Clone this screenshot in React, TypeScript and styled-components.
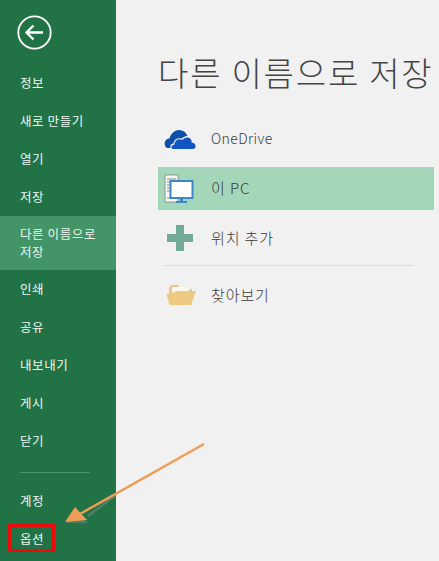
import React, { FunctionComponent } from "react";
import styled, { createGlobalStyle } from "styled-components";

const GlobalStyle = createGlobalStyle`
  html, body {
    margin: 0;
    padding: 0;
    background: #f1f1f1;
  }
  * {
    box-sizing: border-box;
  }
`;

const Page = styled.div`
  position: relative;
  width: 439px;
  height: 561px;
  display: flex;
  overflow: hidden;
  font-family: "Noto Sans CJK KR", "Noto Sans", sans-serif;
`;

const Sidebar = styled.nav`
  width: 116px;
  height: 100%;
  flex-shrink: 0;
  background-color: #217346;
  display: flex;
  flex-direction: column;
  padding-top: 15px;
`;

const BackButton = styled.div`
  width: 35px;
  height: 35px;
  margin: 0 0 14px 17px;
  display: flex;
`;

const NavItem = styled.div<{ $active?: boolean }>`
  display: flex;
  align-items: center;
  padding: ${(p) => (p.$active ? "9px 20px" : "0 20px 1px")};
  min-height: ${(p) => (p.$active ? "54px" : "38px")};
  background-color: ${(p) => (p.$active ? "#439467" : "transparent")};
  color: #f0f6f2;
  font-size: 12.5px;
  line-height: 18px;
  letter-spacing: 0.6px;
`;

const NavDivider = styled.div`
  height: 1px;
  margin: 12px 26px 9px 20px;
  background-color: #4f9270;
`;

const Main = styled.main`
  flex: 1;
  padding: 49px 5px 0 42px;
  display: flex;
  flex-direction: column;
  background-color: #f1f1f1;
`;

const Title = styled.h1`
  margin: 0 0 21px;
  height: 47px;
  line-height: 47px;
  font-size: 33px;
  font-weight: 300;
  color: #444444;
  letter-spacing: 1.8px;
  white-space: nowrap;
`;

const PlaceRow = styled.div<{ $active?: boolean; $latin?: boolean }>`
  display: flex;
  align-items: center;
  height: ${(p) => (p.$active ? "43px" : "44px")};
  background-color: ${(p) => (p.$active ? "#a4d7b9" : "transparent")};
  color: #3a3a3a;
  font-size: ${(p) => (p.$latin ? "14px" : "15px")};
  font-weight: 300;
  letter-spacing: ${(p) => (p.$latin ? "0.4px" : "0.9px")};

  & + & {
    margin-top: 6px;
  }
`;

const PlaceLabel = styled.span`
  padding-bottom: 2px;
`;

const IconSlot = styled.div<{ $inset?: number }>`
  width: 53px;
  padding-left: ${(p) => p.$inset ?? 6}px;
  display: flex;
  align-items: center;
`;

const PlaceDivider = styled.div`
  height: 1px;
  margin: 5px 20px 7px 5px;
  background-color: #dcdcdc;
`;

const RedBox = styled.div`
  position: absolute;
  left: 8px;
  top: 524px;
  width: 47px;
  height: 28px;
  border: 3px solid #ee0a0a;
`;

const ArrowLayer = styled.svg`
  position: absolute;
  left: 0;
  top: 0;
  pointer-events: none;
`;

const BackIcon = () => (
  <svg width="35" height="35" viewBox="0 0 35 35" fill="none" stroke="#ffffff">
    <circle cx="17.5" cy="17.5" r="16.2" strokeWidth="1.8" />
    <path d="M9.5 17.5 H26 M16.5 10.5 L9.5 17.5 L16.5 24.5" strokeWidth="2.4" />
  </svg>
);

const CloudIcon = () => (
  <svg width="32" height="22" viewBox="0 0 32 22">
    <path
      d="M2 19.5 C-1 15 1.5 10.500 5.500 10.500 C7 5 11 2 15 2 C19 2 22 4 23.500 8 C21 8 19 9 18 10.500 C14 9.500 10 11 9.500 15.500 C7 15.500 6 17.500 6.500 20 C4.500 20 3 20 2 19.500 Z"
      fill="#0f4fa8"
    />
    <path
      d="M9 21 C7 21 6.500 17 10.500 16.500 C10.500 12 15 10 18.500 12 C20 9.500 24.500 8 27 11.500 C28 13.500 27.500 14 27.500 14.500 C31 14.500 32.500 18 31 20 C30.500 20.700 30 21 29 21 Z"
      fill="#1155c0"
    />
  </svg>
);

const ComputerIcon = () => (
  <svg width="30" height="30" viewBox="0 0 30 30">
    <rect x="1" y="1" width="13" height="27" fill="#f7f7f5" stroke="#8b9a90" strokeWidth="1" />
    <path
      d="M3 5 H12 M3 8 H12 M3 11 H7 M3 14 H7 M3 17 H7 M3 24 H9"
      stroke="#7f8a84"
      strokeWidth="1"
    />
    <rect x="6.500" y="7" width="22" height="17" fill="#ffffff" stroke="#3f86c6" strokeWidth="2" />
    <rect x="16" y="24" width="3" height="3" fill="#3f86c6" />
    <rect x="12" y="27" width="11" height="2" fill="#3f86c6" />
  </svg>
);

const PlusIcon = () => (
  <svg width="26" height="26" viewBox="0 0 26 26">
    <path d="M9 0 H17 V9 H26 V17 H17 V26 H9 V17 H0 V9 H9 Z" fill="#73aa95" />
  </svg>
);

const FolderIcon = () => (
  <svg width="30" height="22" viewBox="0 0 30 22">
    <path d="M3 4 L3 20 H26 V5 H14 L12 1 H5 Z" fill="#e9c88e" />
    <rect x="6" y="3" width="17" height="9" fill="#fbf8f0" />
    <path d="M0.500 10 C6 9 9 8 12 7 H30 L25 21 H3.500 Z" fill="#edc981" />
  </svg>
);

const topItems = ["정보", "새로 만들기", "열기", "저장"];
const middleItems = ["인쇄", "공유", "내보내기", "게시", "닫기"];

const App: FunctionComponent = () => {
  return (
    <Page>
      <GlobalStyle />
      <Sidebar>
        <BackButton>
          <BackIcon />
        </BackButton>
        {topItems.map((item) => (
          <NavItem key={item}>{item}</NavItem>
        ))}
        <NavItem $active>
          <span>
            다른 이름으로
            <br />
            저장
          </span>
        </NavItem>
        {middleItems.map((item) => (
          <NavItem key={item}>{item}</NavItem>
        ))}
        <NavDivider />
        <NavItem>계정</NavItem>
        <NavItem>옵션</NavItem>
      </Sidebar>
      <Main>
        <Title>다른 이름으로 저장</Title>
        <PlaceRow $latin>
          <IconSlot>
            <CloudIcon />
          </IconSlot>
          <PlaceLabel>OneDrive</PlaceLabel>
        </PlaceRow>
        <PlaceRow $active>
          <IconSlot>
            <ComputerIcon />
          </IconSlot>
          <PlaceLabel>이 PC</PlaceLabel>
        </PlaceRow>
        <PlaceRow>
          <IconSlot $inset={9}>
            <PlusIcon />
          </IconSlot>
          <PlaceLabel>위치 추가</PlaceLabel>
        </PlaceRow>
        <PlaceDivider />
        <PlaceRow>
          <IconSlot $inset={8}>
            <FolderIcon />
          </IconSlot>
          <PlaceLabel>찾아보기</PlaceLabel>
        </PlaceRow>
      </Main>
      <RedBox />
      <ArrowLayer width="439" height="561" viewBox="0 0 439 561">
        <path d="M116 495 L88 516" stroke="#8d8d8d" strokeWidth="2.500" fill="none" opacity="0.45" />
        <path d="M65 523 L88 523 L80 516 Z" fill="#8d8d8d" opacity="0.45" />
        <path d="M204 444 L80 514" stroke="#ed9d55" strokeWidth="2.500" fill="none" />
        <path d="M65 522 L87 520 L75 507 Z" fill="#ed9d55" />
      </ArrowLayer>
    </Page>
  );
};

export default App;
